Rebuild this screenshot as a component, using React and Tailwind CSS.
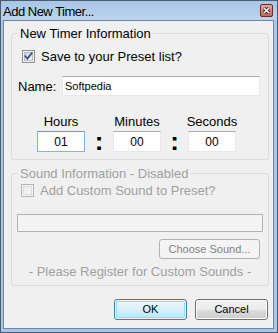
import React from "react";

function Checkbox({ checked, disabled }) {
  return (
    <svg width="13" height="13" viewBox="0 0 13 13" className="shrink-0 block">
      <defs>
        <linearGradient id={disabled ? "cbd" : "cbe"} x1="0" y1="0" x2="1" y2="1">
          <stop offset="0" stopColor={disabled ? "#ececec" : "#cbcfd5"} />
          <stop offset="1" stopColor={disabled ? "#f7f7f7" : "#f6f6f6"} />
        </linearGradient>
      </defs>
      <rect x="0.5" y="0.5" width="12" height="12" fill={disabled ? "#f4f4f4" : "#f4f4f4"} stroke={disabled ? "#b5b5b5" : "#8e8f8f"} />
      <rect x="2.5" y="2.5" width="8" height="8" fill={`url(#${disabled ? "cbd" : "cbe"})`} stroke={disabled ? "#dcdcdc" : "#b9bcc2"} />
      {checked && (
        <path d="M3.3 6.2 L5.4 8.6 L9.8 3.2" stroke="#364f86" strokeWidth="1.7" fill="none" strokeLinecap="square" />
      )}
    </svg>
  );
}

function CloseBtn() {
  return (
    <svg width="13" height="13" viewBox="0 0 13 13" className="block">
      <defs>
        <linearGradient id="cl" x1="0" y1="0" x2="0" y2="1">
          <stop offset="0" stopColor="#e8aaa2" />
          <stop offset="0.5" stopColor="#d3857b" />
          <stop offset="1" stopColor="#c0655a" />
        </linearGradient>
      </defs>
      <rect x="0.5" y="0.5" width="12" height="12" rx="1.5" fill="url(#cl)" stroke="#6e2a25" />
      <path d="M4.2 4.2 L8.8 8.8 M8.8 4.2 L4.2 8.8" stroke="#4a1b17" strokeWidth="3.4" />
      <path d="M4.2 4.2 L8.8 8.8 M8.8 4.2 L4.2 8.8" stroke="#ffffff" strokeWidth="1.6" />
    </svg>
  );
}

function TimeCol({ label, value, focused }) {
  return (
    <div className="flex flex-col items-center w-[48px]">
      <div className="leading-[15px] whitespace-nowrap">{label}</div>
      <div
        className={
          "mt-[2px] w-[48px] h-[21px] bg-white border flex items-center justify-center text-[12px] " +
          (focused
            ? "border-[#7eb4ea] border-t-[#569de5]"
            : "border-[#e3e9ef] border-t-[#abadb3]")
        }
      >
        {value}
      </div>
    </div>
  );
}

function Colon({ w }) {
  return (
    <div className={"self-end h-[21px] flex justify-center " + w}>
      <span className="text-[26px] font-bold leading-[21px]">:</span>
    </div>
  );
}

export default function App() {
  return (
    <div className="w-[278px] h-[333px] bg-[#a9c7e8] border border-[#4a5c70] flex flex-col font-['Liberation_Sans',Arial,sans-serif] text-[13px] text-black overflow-hidden">
      <div className="h-[19px] shrink-0 flex items-center justify-between pl-[2px] pr-[4px] bg-gradient-to-b from-[#a8c6e8] to-[#bdd4ec]">
        <span className="text-[13px] tracking-[-0.5px] leading-none pt-[1px]">Add New Timer...</span>
        <CloseBtn />
      </div>
      <div className="flex-1 ml-[2px] mr-[3px] mb-[3px] border border-[#6f87a3] bg-[#f0f0f0] flex flex-col">
        <fieldset className="ml-[7px] mt-[5px] w-[258px] border border-[#d5dfe5] rounded-[3px] pb-[7px]">
          <legend className="ml-[6px] px-[2px] leading-[15px]">New Timer Information</legend>
          <div className="mt-[8px] h-[15px] flex items-center pl-[10px]">
            <Checkbox checked />
            <span className="ml-[6px] leading-[15px]">Save to your Preset list?</span>
          </div>
          <div className="mt-[12px] flex items-center pl-[6px]">
            <span className="w-[44px] leading-[15px]">Name:</span>
            <div className="w-[198px] h-[20px] bg-white border border-[#e3e9ef] border-t-[#abadb3] flex items-center pl-[2px] text-[11px]">
              Softpedia
            </div>
          </div>
          <div className="mt-[18px] flex pl-[25px]">
            <TimeCol label="Hours" value="01" focused />
            <Colon w="w-[28px]" />
            <TimeCol label="Minutes" value="00" />
            <Colon w="w-[27px]" />
            <TimeCol label="Seconds" value="00" />
          </div>
        </fieldset>

        <fieldset className="ml-[7px] mt-[6px] w-[258px] border border-[#d5dfe5] rounded-[3px] pb-[6px] text-[#a0a0a0]">
          <legend className="ml-[6px] px-[2px] leading-[15px]">Sound Information - Disabled</legend>
          <div className="mt-[2px] h-[15px] flex items-center pl-[9px]">
            <Checkbox disabled />
            <span className="ml-[6px] leading-[15px]">Add Custom Sound to Preset?</span>
          </div>
          <div className="mt-[16px] ml-[5px] w-[246px] h-[18px] bg-[#f4f4f4] border border-[#adb2b5] rounded-[1px]" />
          <div className="mt-[7px] flex justify-end pr-[8px]">
            <div className="w-[101px] h-[20px] border border-[#adb2b5] rounded-[3px] bg-[#f4f4f4] flex items-center justify-center text-[11px] text-[#838383]">
              Choose Sound...
            </div>
          </div>
          <div className="mt-[5px] text-center leading-[15px]">- Please Register for Custom Sounds -</div>
        </fieldset>

        <div className="mt-[13px] flex justify-end gap-[8px] pr-[5px]">
          <div className="w-[73px] h-[21px] rounded-[3px] border border-[#3c7fb1] p-[1px]">
            <div className="w-full h-full rounded-[2px] border border-[#9fd8f6] bg-gradient-to-b from-[#eaf6fd] via-[#d9f0fc] to-[#bee6fd] flex items-center justify-center text-[11px]">
              OK
            </div>
          </div>
          <div className="w-[73px] h-[21px] rounded-[3px] border border-[#707070] p-0">
            <div className="w-full h-full rounded-[2px] border border-[#fcfcfc] bg-[linear-gradient(to_bottom,#f2f2f2_0%,#ebebeb_50%,#dddddd_50%,#cfcfcf_100%)] flex items-center justify-center text-[11px]">
              Cancel
            </div>
          </div>
        </div>
      </div>
    </div>
  );
}
